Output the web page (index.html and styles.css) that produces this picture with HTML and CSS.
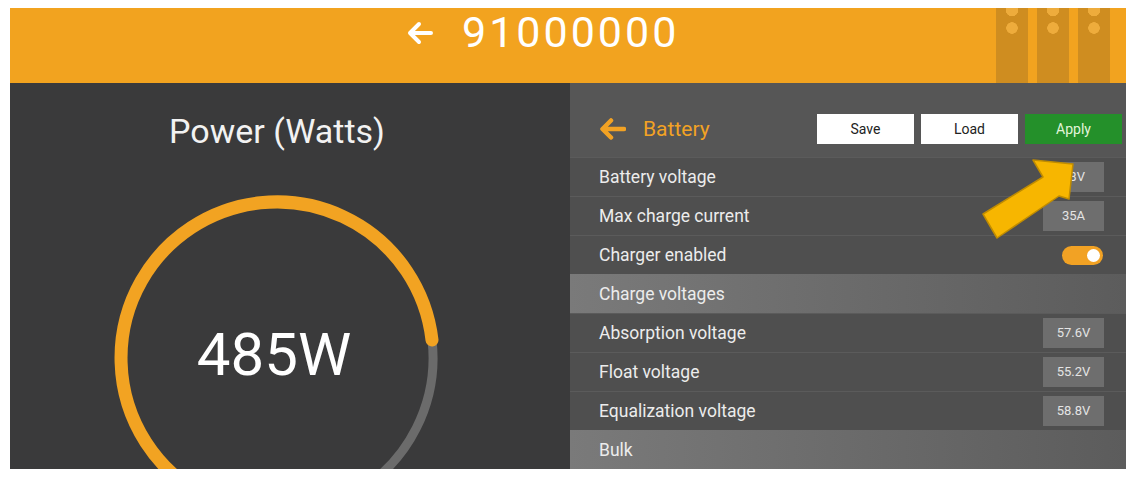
FILE: index.html
```html
<!DOCTYPE html>
<html>
<head>
  <title>91000000 - Battery</title>
  <link rel="stylesheet" href="styles.css">
</head>
<body>
  <div class="app">
    <header class="topbar">
      <div class="topbar-title">
        <svg class="back" width="28" height="24" viewBox="0 0 28 24">
          <path d="M26 12H5 M14 3L5 12L14 21" fill="none" stroke="#fff" stroke-width="4" stroke-linecap="round" stroke-linejoin="round"/>
        </svg>
        <span class="serial">91000000</span>
      </div>
      <div class="stripes"><span></span><span></span><span></span></div>
    </header>

    <main class="content">
      <section class="gauge-panel">
        <h1>Power (Watts)</h1>
        <svg class="gauge" width="340" height="340" viewBox="0 0 340 340">
          <path d="M325 152 A156 156 0 0 1 248 305" fill="none" stroke="#6b6b6b" stroke-width="9"/>
          <path d="M92 305 A156 156 0 1 1 325 152" fill="none" stroke="#f2a322" stroke-width="13" stroke-linecap="round"/>
          <text x="167" y="187" text-anchor="middle" class="gauge-value">485W</text>
        </svg>
      </section>

      <section class="settings">
        <div class="settings-head">
          <svg class="back" width="28" height="22" viewBox="0 0 28 22">
            <path d="M26 11H5 M13 2.5L4.5 11L13 19.5" fill="none" stroke="#f2a224" stroke-width="4.5" stroke-linecap="round" stroke-linejoin="round"/>
          </svg>
          <span class="settings-title">Battery</span>
          <div class="actions">
            <button>Save</button>
            <button>Load</button>
            <button class="apply">Apply</button>
          </div>
        </div>

        <div class="row"><span>Battery voltage</span><span class="value">48V</span></div>
        <div class="row"><span>Max charge current</span><span class="value">35A</span></div>
        <div class="row"><span>Charger enabled</span><span class="toggle on"></span></div>
        <div class="row group">Charge voltages</div>
        <div class="row"><span>Absorption voltage</span><span class="value">57.6V</span></div>
        <div class="row"><span>Float voltage</span><span class="value">55.2V</span></div>
        <div class="row"><span>Equalization voltage</span><span class="value">58.8V</span></div>
        <div class="row group">Bulk</div>

        <!-- annotation arrow pointing at Apply -->
        <svg class="callout" width="105" height="90" viewBox="0 0 105 90">
          <polygon points="93,9 53,5 63,22 3,59 17,83 79,41 89,44" fill="#f7b600" stroke="#c08c00" stroke-width="1.5" stroke-linejoin="round"/>
        </svg>
      </section>
    </main>
  </div>
</body>
</html>
```

FILE: styles.css
```css
body {
  margin: 0;
  background: #fff;
  font-family: Roboto, "Liberation Sans", sans-serif;
}
.app {
  margin: 8px 7px 8px 10px;
  width: 1116px;
}

/* top bar */
.topbar {
  display: flex;
  height: 75px;
  background-color: #f2a31f;
}
.topbar-title {
  align-self: flex-start;
  display: flex;
  align-items: center;
  padding-top: 3px;
  padding-left: 395px;
}
.topbar-title .back {
  margin-right: 29px;
}
.serial {
  color: #fff;
  font-size: 43px;
  line-height: 43px;
  letter-spacing: 3px;
}
.stripes {
  margin-left: auto;
  margin-right: 16px;
  display: flex;
  gap: 9px;
}
.stripes span {
  width: 32px;
  background:
    radial-gradient(circle at 50% 2px, #eeac3c 6px, transparent 6.5px),
    radial-gradient(circle at 50% 20px, #eeac3c 5.5px, transparent 6px),
    #cf8d20;
}

.content {
  display: flex;
  height: 386px;
}

/* left: power gauge */
.gauge-panel {
  width: 560px;
  box-sizing: border-box;
  padding: 28px 26px 0 0;
  background-color: #3a3a3b;
  overflow: hidden;
  text-align: center;
}
.gauge-panel h1 {
  margin: 0;
  color: #f2f2f2;
  font-size: 34px;
  font-weight: normal;
  line-height: 40px;
}
.gauge {
  display: block;
  margin: 37px auto 0;
}
.gauge-value {
  fill: #fff;
  font-family: Roboto, "Liberation Sans", sans-serif;
  font-size: 60px;
}

/* right: battery settings */
.settings {
  position: relative;
  width: 556px;
  background-color: #565656;
  color: #ececec;
  overflow: hidden;
}
.settings-head {
  display: flex;
  align-items: center;
  height: 74px;
  box-sizing: border-box;
  padding: 31px 4px 13px 28px;
}
.settings-title {
  margin-left: 17px;
  color: #f2a224;
  font-size: 21px;
}
.actions {
  margin-left: auto;
  display: flex;
  gap: 7px;
}
.actions button {
  width: 97px;
  height: 30px;
  border: none;
  border-radius: 0;
  background-color: #fff;
  color: #222;
  font-family: Roboto, "Liberation Sans", sans-serif;
  font-size: 14px;
  padding: 0;
}
.actions .apply {
  background-color: #24902a;
  color: #e2f5da;
}

.row {
  display: flex;
  align-items: center;
  justify-content: space-between;
  height: 39px;
  box-sizing: border-box;
  padding: 0 22px 0 29px;
  border-top: 1px solid #5b5b5b;
  background-color: #4f4f4f;
  font-size: 17.5px;
}
.row.group {
  border-top: none;
  background: linear-gradient(90deg, #7a7a7a, #5c5c5c);
}
.value {
  width: 61px;
  height: 30px;
  line-height: 30px;
  text-align: center;
  background-color: #6e6e6e;
  color: #e4e4e4;
  font-size: 13px;
}
.toggle {
  position: relative;
  width: 41px;
  height: 19px;
  margin-right: 1px;
  border-radius: 10px;
  background-color: #aaa;
}
.toggle.on {
  background-color: #f2a224;
}
.toggle:before {
  content: "";
  position: absolute;
  top: 3px;
  left: 3px;
  width: 13px;
  height: 13px;
  border-radius: 50%;
  background-color: #fff;
}
.toggle.on:before {
  left: 25px;
}

.callout {
  position: absolute;
  left: 410px;
  top: 72px;
}
```
